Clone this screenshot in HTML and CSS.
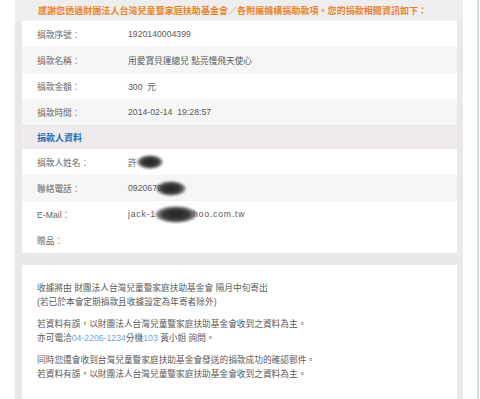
FILE: index.html
```html
<!DOCTYPE html>
<html lang="zh-Hant">
<head>
    <meta charset="UTF-8">
    <meta name="viewport" content="width=device-width, initial-scale=1.0">
    <title>捐款資訊</title>
    <link rel="stylesheet" href="styles.css">
</head>
<body>
    <div class="page">
        <div class="panel">
            <div class="thanks">感謝您透過財團法人台灣兒童暨家庭扶助基金會／各附屬機構捐助款項。您的捐款相關資訊如下：</div>

            <div class="rows">
                <div class="row"><span class="label">捐款序號：</span><span class="value">1920140004399</span></div>
                <div class="row alt"><span class="label">捐款名稱：</span><span class="value">用愛寶貝運總兒 點亮慢飛天使心</span></div>
                <div class="row"><span class="label">捐款金額：</span><span class="value">300&nbsp; 元</span></div>
                <div class="row alt"><span class="label">捐款時間：</span><span class="value">2014-02-14&nbsp; 19:28:57</span></div>
            </div>

            <div class="section">捐款人資料</div>

            <div class="rows">
                <div class="row"><span class="label">捐款人姓名：</span><span class="value">許<span class="mask mask-name"></span></span></div>
                <div class="row alt"><span class="label">聯絡電話：</span><span class="value">0920679<span class="mask mask-phone"></span></span></div>
                <div class="row"><span class="label">E-Mail：</span><span class="value email">jack-1<span class="mask mask-mail"></span>hoo.com.tw</span></div>
                <div class="row"><span class="label">贈品：</span><span class="value"></span></div>
            </div>

            <div class="notes">
                <p>收據將由 財團法人台灣兒童暨家庭扶助基金會 隔月中旬寄出<br>(若已於本會定期捐款且收據設定為年寄者除外)</p>
                <p>若資料有誤，以財團法人台灣兒童暨家庭扶助基金會收到之資料為主。<br>亦可電洽<span class="tel">04-2206-1234</span>分機<span class="tel">103</span> 黃小姐 詢問。</p>
                <p>同時您還會收到台灣兒童暨家庭扶助基金會發送的捐款成功的確認郵件。<br>若資料有誤，以財團法人台灣兒童暨家庭扶助基金會收到之資料為主。</p>
            </div>
        </div>
        <div class="side"></div>
    </div>
</body>
</html>
```

FILE: styles.css
```css
body {
    margin: 0;
    background: #fff;
    font-family: 'Liberation Sans', 'Noto Sans CJK TC', sans-serif;
    font-size: 8.7px;
    color: #5a5a5a;
    overflow: hidden;
}
.page {
    display: flex;
    padding-left: 15px;
    height: 399px;
}
.panel {
    width: 435px;
    padding: 0 6px 0 7px;
    background: #e9e9e9;
    display: flex;
    flex-direction: column;
}
.side {
    width: 14px;
    border-right: 2px solid #d3e2db;
}
.thanks {
    height: 21px;
    line-height: 23px;
    margin: 0 -6px 0 -7px;
    padding-left: 23px;
    background: #efeeee;
    color: #e8832b;
    font-size: 9px;
    font-weight: bold;
    letter-spacing: 0.05px;
    white-space: nowrap;
}
.rows {
    background: #fff;
}
.row {
    display: flex;
    align-items: center;
    height: 26px;
    background: #fff;
}
.row.alt {
    background: #f6f6f6;
}
.label {
    flex: none;
    width: 91px;
    padding-left: 15px;
    color: #666;
    white-space: nowrap;
}
.value {
    display: flex;
    align-items: center;
    white-space: nowrap;
}
.email {
    letter-spacing: 0.8px;
}
.section {
    height: 23px;
    line-height: 24px;
    margin-top: 1px;
    padding-left: 15px;
    background: #efebec;
    color: #1f6db3;
    font-weight: bold;
    font-size: 9px;
}
.mask {
    display: inline-block;
    height: 14px;
    border-radius: 50%;
    background: radial-gradient(ellipse at center, #222 0%, #3a3a3a 45%, rgba(80, 80, 80, 0.6) 65%, rgba(255, 255, 255, 0) 75%);
    filter: blur(0.8px);
}
.mask-name {
    width: 26px;
}
.mask-phone {
    width: 30px;
    height: 15px;
    margin-left: -6px;
}
.mask-mail {
    width: 42px;
    height: 17px;
    margin: 0 -4px 0 -1px;
}
.notes {
    flex: 1;
    margin-top: 12px;
    padding: 16px 15px 0;
    background: #fff;
    line-height: 14px;
}
.notes p {
    margin: 0 0 8px;
    white-space: nowrap;
}
.tel {
    color: #6aa7d8;
}
```
